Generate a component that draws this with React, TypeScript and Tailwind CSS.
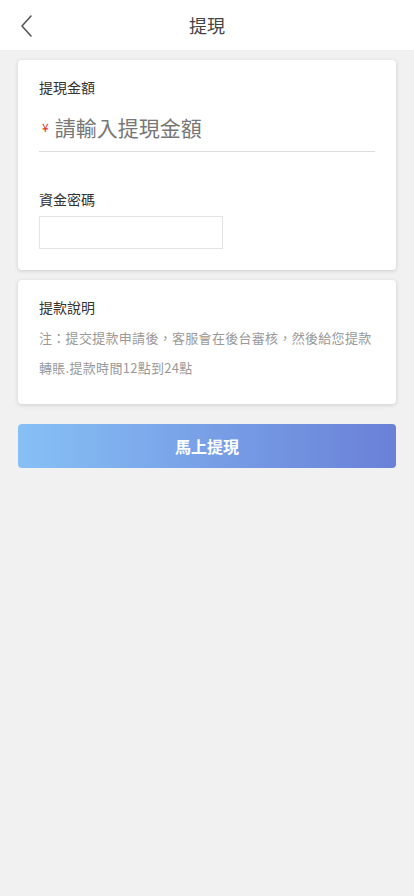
import React from "react";

export default function App() {
  return (
    <div
      className="min-h-[896px] bg-[#f1f1f1] text-[#333]"
      style={{ fontFamily: '"Noto Sans CJK TC", "Noto Sans", sans-serif' }}
    >
      <div className="relative flex h-[50px] items-center justify-center bg-white">
        <button className="absolute left-[14px] top-[10px] p-1">
          <svg width="18" height="24" viewBox="0 0 18 24" fill="none">
            <path d="M13 2 L4 12 L13 22" stroke="#555" strokeWidth="1.6" strokeLinecap="round" strokeLinejoin="round" />
          </svg>
        </button>
        <div className="text-[18px] text-[#444]">提現</div>
      </div>

      <div className="px-[18px] pt-[10px]">
        <div className="rounded-[4px] bg-white px-[21px] pb-[21px] pt-[16px] shadow-[0_1px_4px_rgba(0,0,0,0.15)]">
          <div className="text-[14px] leading-[22px] text-[#333]">提現金額</div>
          <div className="mt-[15px] flex items-center border-b border-[#ddd] pb-[10px]">
            <span className="ml-[3px] mr-[6px] text-[12px] text-[#e2332a]">¥</span>
            <span className="text-[21px] leading-[28px] text-[#777]">請輸入提現金額</span>
          </div>
          <div className="mt-[36px] text-[14px] leading-[22px] text-[#333]">資金密碼</div>
          <div className="mt-[6px] h-[33px] w-[184px] border border-[#e3e3e3]" />
        </div>

        <div className="mt-[10px] rounded-[4px] bg-white px-[21px] pb-[21px] pt-[16px] shadow-[0_1px_4px_rgba(0,0,0,0.15)]">
          <div className="text-[14px] leading-[22px] text-[#333]">提款說明</div>
          <div className="mt-[5px] text-[13px] leading-[30px] tracking-[0.3px] text-[#999]">
            注：提交提款申請後，客服會在後台審核，然後給您提款轉賬.提款時間12點到24點
          </div>
        </div>

        <button className="mt-[20px] flex h-[44px] w-full items-center justify-center rounded-[4px] bg-gradient-to-r from-[#86c0f5] to-[#6a80d7] text-[16px] font-bold text-white">
          馬上提現
        </button>
      </div>
    </div>
  );
}
